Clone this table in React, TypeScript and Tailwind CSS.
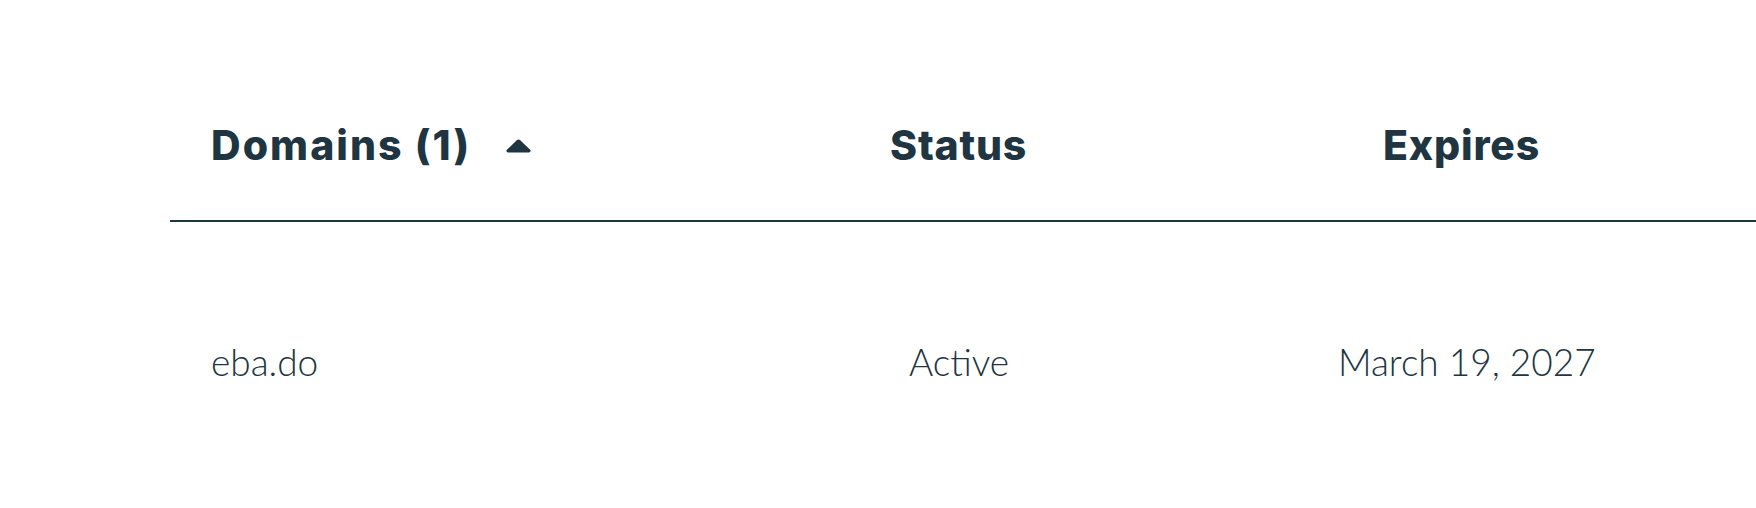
import React from "react";

const headBase = "font-['Inter','Liberation_Sans',sans-serif] font-extrabold text-[41px] leading-[48px] text-[#203542]";
const head = headBase + " tracking-[0.02em]";
const headWide = headBase + " tracking-[0.05em]";
const body = "font-['Lato','Liberation_Sans',sans-serif] font-light text-[37px] leading-[44px] text-[#203542]";

export default function App() {
  return (
    <div className="w-[1756px] h-[508px] bg-white overflow-hidden pl-[170px] pt-[121px]">
      <div className="flex h-[101px] border-b-2 border-[#203542]">
        <div className="w-[640px] pl-[41px] flex items-start">
          <span className={headWide}>Domains (1)</span>
          <svg className="ml-[34px] mt-[18px]" width="27" height="14" viewBox="0 0 26 14">
            <path d="M11.3 1.3 Q13 -0.3 14.7 1.3 L24.4 10.6 Q26.2 12.6 23.6 13.4 L2.4 13.4 Q-0.2 12.6 1.6 10.6 Z" fill="#203542" />
          </svg>
        </div>
        <div className="w-[440px] pl-[80px]">
          <span className={head}>Status</span>
        </div>
        <div className="flex-1 pl-[133px]">
          <span className={head}>Expires</span>
        </div>
      </div>
      <div className="flex pt-[118px]">
        <div className="w-[640px] pl-[41px]">
          <span className={body}>eba.do</span>
        </div>
        <div className="w-[440px] pl-[99px]">
          <span className={body}>Active</span>
        </div>
        <div className="flex-1 pl-[88px]">
          <span className={body}>March 19, 2027</span>
        </div>
      </div>
    </div>
  );
}
